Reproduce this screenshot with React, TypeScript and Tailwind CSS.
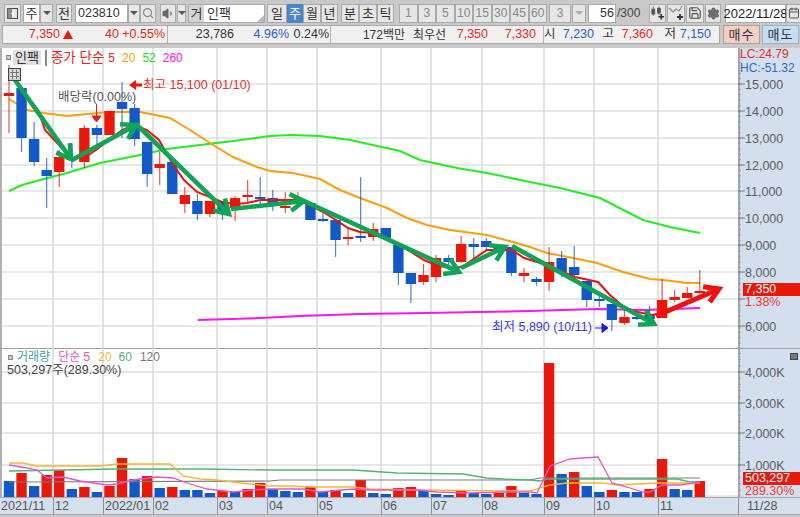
import { Calendar, Save, Search, Settings, Volume1 } from 'lucide-react';
import type { ReactNode } from 'react';
import { twMerge } from 'tailwind-merge';

type Candle = [number, number, number, number, 'r' | 'b']; // bodyTop, bodyBottom, wickTop, wickBottom, colour
type Pt = [number, number];

const RED = '#e8190a';
const BLUE = '#1259c8';
const ARROW = '#11a457';

const candles: Candle[] = [
  [93, 96, 65, 133, 'r'], [88, 138, 88, 152, 'b'], [139, 162, 122, 166, 'b'], [170, 176, 158, 208, 'b'],
  [157, 172, 150, 187, 'r'], [157, 160, 143, 168, 'b'], [128, 162, 125, 168, 'r'], [128, 135, 125, 145, 'b'],
  [111, 135, 111, 135, 'r'], [102, 109, 82, 138, 'b'], [108, 139, 104, 146, 'b'], [142, 174, 142, 187, 'b'],
  [164, 168, 152, 185, 'r'], [162, 194, 162, 194, 'b'], [195, 204, 187, 213, 'r'], [201, 214, 194, 220, 'b'],
  [201, 214, 201, 217, 'r'], [201, 213, 201, 220, 'b'], [198, 208, 196, 221, 'r'], [195, 197, 180, 202, 'r'],
  [197, 199, 177, 207, 'b'], [198, 204, 190, 211, 'b'], [206, 208, 192, 213, 'r'], [200, 202, 192, 206, 'r'],
  [203, 220, 203, 220, 'b'], [219, 221, 213, 222, 'b'], [220, 240, 220, 257, 'b'], [237, 239, 229, 245, 'r'],
  [236, 238, 177, 242, 'b'], [229, 237, 223, 241, 'r'], [228, 238, 228, 238, 'b'], [245, 273, 245, 285, 'b'],
  [273, 284, 273, 303, 'b'], [275, 282, 264, 285, 'r'], [258, 277, 255, 282, 'r'], [258, 262, 255, 270, 'b'],
  [244, 262, 236, 263, 'r'], [244, 247, 238, 260, 'b'], [241, 247, 238, 250, 'b'], [247, 250, 247, 259, 'b'],
  [247, 273, 247, 276, 'b'], [273, 276, 268, 282, 'r'], [279, 282, 277, 286, 'b'], [262, 282, 247, 291, 'r'],
  [258, 272, 251, 277, 'b'], [267, 275, 246, 280, 'b'], [281, 300, 281, 307, 'b'], [299, 301, 295, 307, 'b'],
  [304, 320, 304, 331, 'b'], [317, 323, 310, 325, 'r'], [317, 319, 310, 320, 'b'], [315, 319, 306, 319, 'b'],
  [300, 318, 279, 318, 'r'], [297, 300, 290, 302, 'r'], [293, 298, 287, 298, 'r'], [291, 293, 270, 294, 'r'],
];

const volumes: [number, 'r' | 'b'][] = [
  [481, 'b'], [473, 'r'], [486, 'b'], [475, 'r'], [470, 'r'], [489, 'b'], [487, 'r'], [492, 'b'],
  [486, 'r'], [458, 'r'], [479, 'b'], [476, 'r'], [488, 'b'], [487, 'r'], [490, 'b'], [490, 'b'],
  [493, 'b'], [491, 'r'], [492, 'b'], [489, 'r'], [483, 'r'], [489, 'b'], [491, 'b'], [492, 'b'],
  [487, 'r'], [492, 'b'], [490, 'r'], [493, 'b'], [480, 'r'], [493, 'b'], [494, 'b'], [488, 'r'],
  [487, 'r'], [491, 'b'], [494, 'b'], [495, 'b'], [491, 'r'], [493, 'b'], [494, 'b'], [493, 'r'],
  [486, 'r'], [493, 'b'], [494, 'b'], [363, 'r'], [474, 'b'], [472, 'r'], [486, 'b'], [492, 'b'],
  [490, 'r'], [492, 'b'], [492, 'b'], [489, 'r'], [459, 'r'], [489, 'b'], [490, 'b'], [481, 'r'],
];

const ma5: Pt[] = [[20, 87], [38, 110], [45, 130], [59, 145], [71, 158], [84, 158], [96, 150], [109, 140], [122, 130], [134, 125], [147, 130], [159, 140], [172, 163], [184, 180], [197, 192], [222, 202], [235, 204], [247, 203], [260, 200], [285, 200], [298, 200], [310, 205], [323, 212], [336, 220], [348, 228], [360, 232], [373, 233], [386, 238], [399, 245], [411, 252], [424, 260], [436, 265], [449, 268], [462, 267], [475, 258], [487, 250], [512, 250], [524, 258], [550, 266], [563, 272], [575, 277], [598, 282], [610, 295], [625, 308], [638, 312], [651, 315], [663, 313]];
const ma20: Pt[] = [[9, 99], [27, 110], [43, 113], [67, 116], [87, 114], [110, 112], [140, 112], [170, 118], [190, 130], [213, 145], [233, 157], [257, 167], [270, 171], [293, 173], [320, 179], [340, 190], [360, 198], [387, 208], [407, 218], [427, 225], [450, 230], [487, 235], [513, 242], [530, 247], [547, 253], [573, 258], [597, 263], [623, 272], [650, 279], [663, 280], [687, 283], [700, 283]];
const ma52: Pt[] = [[9, 191], [22, 185], [40, 180], [67, 173], [100, 163], [140, 155], [167, 149], [200, 145], [233, 141], [270, 136], [290, 135], [320, 136], [350, 140], [400, 151], [420, 160], [457, 168], [487, 173], [530, 182], [560, 188], [600, 198], [643, 220], [670, 227], [700, 233]];
const ma260: Pt[] = [[198, 320], [260, 318], [300, 316], [360, 314], [427, 313], [477, 312], [530, 311], [563, 310], [597, 309], [643, 310], [700, 308]];

const volPink: Pt[] = [[9, 465], [27, 468], [37, 470], [47, 478], [63, 477], [80, 481], [107, 485], [117, 484], [133, 480], [157, 477], [173, 478], [187, 483], [207, 489], [233, 492], [253, 490], [270, 489], [303, 489], [320, 492], [353, 489], [370, 490], [417, 490], [437, 492], [470, 493], [503, 492], [530, 492], [537, 493], [550, 466], [570, 459], [583, 458], [598, 457], [612, 483], [627, 487], [643, 492], [650, 492], [662, 485], [680, 485], [700, 482]];
const volOrange: Pt[] = [[9, 463], [23, 463], [37, 466], [100, 466], [117, 464], [170, 464], [183, 476], [200, 479], [217, 480], [250, 484], [270, 486], [290, 486], [313, 487], [353, 487], [370, 489], [420, 490], [530, 491], [550, 485], [567, 483], [603, 483], [617, 485], [657, 483], [700, 483]];
const volGreen: Pt[] = [[9, 471], [117, 469], [203, 469], [270, 470], [280, 470], [353, 470], [397, 473], [463, 474], [487, 478], [503, 479], [530, 480], [540, 481], [547, 479], [677, 479], [690, 482], [700, 482]];
const volGray: Pt[] = [[9, 482], [270, 481], [280, 480], [530, 480], [540, 478], [700, 478]];

const vGrid = [53, 103, 153, 217, 267, 317, 381, 431, 482, 544, 594, 658];
const priceTicks = [84, 111, 138, 165, 191, 218, 245, 272, 299, 326];
const priceLabels = ['15,000', '14,000', '13,000', '12,000', '11,000', '10,000', '9,000', '8,000', '', '6,000'];
const volTicks = [372, 403, 433, 465];
const volLabels = ['4,000K', '3,000K', '2,000K', '1,000K'];

const months: [string, string][] = [
  ['2021/11', 'w-[53px]'], ['12', 'w-[50px]'], ['2022/01', 'w-[50px]'], ['02', 'w-[64px]'], ['03', 'w-[50px]'],
  ['04', 'w-[50px]'], ['05', 'w-[64px]'], ['06', 'w-[50px]'], ['07', 'w-[51px]'], ['08', 'w-[62px]'],
  ['09', 'w-[50px]'], ['10', 'w-[64px]'], ['11', 'w-[80px]'], ['11/28', 'w-[62px]'],
];

const candleX = (i: number) => 9 + i * 12.56;
const toPoints = (pts: Pt[]) => pts.map((p) => p.join(',')).join(' ');

function Arrow({ from, to, color = ARROW, width = 4.6 }: { from: Pt; to: Pt; color?: string; width?: number }) {
  const ang = Math.atan2(to[1] - from[1], to[0] - from[0]);
  const barb = (off: number) => [to[0] - 16 * Math.cos(ang + off), to[1] - 16 * Math.sin(ang + off)].join(',');
  return (
    <g stroke={color} strokeWidth={width} fill="none" strokeLinejoin="miter">
      <line x1={from[0]} y1={from[1]} x2={to[0] - 2 * Math.cos(ang)} y2={to[1] - 2 * Math.sin(ang)} />
      <polyline points={`${barb(0.55)} ${to.join(',')} ${barb(-0.55)}`} />
    </g>
  );
}

function Grid({ ys, top, bottom }: { ys: number[]; top: number; bottom: number }) {
  return (
    <g>
      {ys.map((y) => (
        <line key={y} x1="2" x2="738" y1={y} y2={y} stroke="#dfdfdf" strokeWidth="1.5" />
      ))}
      {vGrid.map((x) => (
        <line key={x} x1={x} x2={x} y1={top} y2={bottom} stroke="#d8d8d8" strokeWidth="1.5" />
      ))}
    </g>
  );
}

function PriceChart() {
  return (
    <svg viewBox="0 48 738 301" className="block w-[738px] h-[301px]">
      <Grid ys={priceTicks} top={48} bottom={349} />
      <polyline points={toPoints(ma260)} fill="none" stroke="#ff14f0" strokeWidth="2" />
      <polyline points={toPoints(ma52)} fill="none" stroke="#22ee22" strokeWidth="2" />
      <polyline points={toPoints(ma20)} fill="none" stroke="#ff9d0a" strokeWidth="2" />
      {candles.map(([t, b, wt, wb, c], i) => {
        const fill = c === 'r' ? RED : BLUE;
        const x = candleX(i);
        return (
          <g key={i}>
            <line x1={x} x2={x} y1={wt} y2={wb} stroke={fill} strokeWidth="1.2" opacity="0.75" />
            <rect x={x - 5.2} y={t} width="10.4" height={b - t} fill={fill} />
          </g>
        );
      })}
      <polyline points={toPoints(ma5)} fill="none" stroke="#f01010" strokeWidth="2" />
      <Arrow from={[15, 80]} to={[71, 159]} />
      <Arrow from={[72, 160]} to={[136, 125]} />
      <Arrow from={[136, 124]} to={[229, 214]} />
      <Arrow from={[231, 209]} to={[304, 201]} />
      <Arrow from={[304, 201]} to={[459, 272]} />
      <Arrow from={[461, 268]} to={[505, 247]} />
      <Arrow from={[512, 246]} to={[654, 324]} />
      <Arrow from={[656, 316]} to={[719, 289]} color="#f20f0f" width={5} />
      <path d="M129 85 L136 80 V83.5 H142 V86.5 H136 V90 Z" fill={RED} />
      <path d="M96.500 104 V116 M92 116 H101 L96.500 122 Z" fill={RED} stroke={RED} strokeWidth="1" />
      <path d="M595 328 H602 M602 323.500 L608 328 L602 332.500 Z" fill="#1a1ae6" stroke="#1a1ae6" strokeWidth="1" />
    </svg>
  );
}

function VolumeChart() {
  return (
    <svg viewBox="0 349 738 148" className="block w-[738px] h-[148px]">
      <Grid ys={[372, 403, 433, 465, 496]} top={349} bottom={497} />
      {volumes.map(([top, c], i) => (
        <rect key={i} x={candleX(i) - 5.2} y={top} width="10.4" height={497 - top} fill={c === 'r' ? RED : BLUE} />
      ))}
      <polyline points={toPoints(volGray)} fill="none" stroke="#7c7c7c" strokeWidth="1.2" />
      <polyline points={toPoints(volGreen)} fill="none" stroke="#4fb574" strokeWidth="1.3" />
      <polyline points={toPoints(volOrange)} fill="none" stroke="#f5b635" strokeWidth="1.3" />
      <polyline points={toPoints(volPink)} fill="none" stroke="#e655c8" strokeWidth="1.3" />
    </svg>
  );
}

function AxisScale({ top, height, ticks, labels, step }: { top: number; height: number; ticks: number[]; labels: string[]; step: number }) {
  const minor: number[] = [];
  for (let y = ticks[0] - step; y < top + height; y += step / 5) minor.push(y);
  return (
    <svg viewBox={`738 ${top} 62 ${height}`} className="block w-[62px]" style={{ height }}>
      {minor.map((y) => (
        <line key={y} x1="738" x2="741" y1={y} y2={y} stroke="#9a9a9a" strokeWidth="0.8" />
      ))}
      {ticks.map((y, i) => (
        <g key={y}>
          <line x1="738" x2="745" y1={y} y2={y} stroke="#777" strokeWidth="1" />
          <text x="745" y={y + 4.500} fontSize="12.500" fill="#5c5c5c">{labels[i]}</text>
        </g>
      ))}
    </svg>
  );
}

function Btn({ children, className = '' }: { children?: ReactNode; className?: string }) {
  return (
    <div className={twMerge('flex h-[19px] shrink-0 items-center justify-center border border-[#a9a9a9] bg-[#e6e6e6] text-[#333]', className)}>
      {children}
    </div>
  );
}

function Caret({ color = '#555' }: { color?: string }) {
  return <span className="h-0 w-0 border-x-[4px] border-t-[4px] border-x-transparent" style={{ borderTopColor: color }} />;
}

function CandleAdd({ line = false }: { line?: boolean }) {
  return (
    <svg viewBox="0 0 16 16" className="h-[16px] w-[16px]">
      {line ? (
        <polyline points="1,3 5,7 8,4 11,6 14,1" fill="none" stroke="#8a8a8a" strokeWidth="1.200" />
      ) : (
        <g fill="#555" stroke="#555" strokeWidth="1">
          <rect x="2" y="4" width="3" height="5" />
          <rect x="8" y="3" width="3" height="5" />
          <line x1="3.500" x2="3.500" y1="1" y2="11" />
          <line x1="9.500" x2="9.500" y1="1" y2="10" />
        </g>
      )}
      <path d="M12 9 V15 M9 12 H15" stroke="#333" strokeWidth="1.800" />
    </svg>
  );
}

function TopBar() {
  return (
    <div className="flex h-[25px] shrink-0 items-center pl-[4px] pt-[1px]">
      <Btn className="w-[17px]">
        <svg viewBox="0 0 13 13" className="h-[13px] w-[13px]">
          <rect x="1.500" y="1.500" width="10" height="10" fill="none" stroke="#444" />
          <rect x="1" y="1" width="5" height="11" fill="#666" opacity="0.7" />
          <path d="M8 4 L5 6.500 L8 9 Z" fill="#fff" />
        </svg>
      </Btn>
      <Btn className="ml-[2px] w-[17px] bg-white text-[13px]">주</Btn>
      <Btn className="w-[13px]"><Caret /></Btn>
      <Btn className="ml-[3px] w-[16px] text-[13px]">전</Btn>
      <Btn className="ml-[3px] w-[53px] justify-start bg-white pl-[2px] text-[12.500px]">023810</Btn>
      <Btn className="w-[12px]"><Caret /></Btn>
      <Btn className="w-[16px]"><Search size={12} color="#888" strokeWidth={2.5} /></Btn>
      <Btn className="ml-[4px] w-[16px]"><Volume1 size={13} color="#666" fill="#666" /></Btn>
      <Btn className="ml-[1px] w-[9px]"><Caret /></Btn>
      <div className="relative ml-[2px] flex h-[19px] w-[77px] shrink-0 items-center border border-[#a9a9a9] bg-white text-[13px] text-[#333]">
        <span className="flex h-[17px] w-[15px] items-center justify-center bg-[#d4d4d4]">거</span>
        <span className="ml-[3px]">인팩</span>
        <span className="absolute bottom-0 right-0 h-0 w-0 border-b-[7px] border-l-[7px] border-b-[#bbb] border-l-transparent" />
      </div>
      <Btn className="ml-[2px] w-[20px] text-[13px]">일</Btn>
      <Btn className="w-[16px] border-[#4a83c4] bg-[#4a87c9] text-[13px] text-white">주</Btn>
      <Btn className="w-[18px] text-[13px]">월</Btn>
      <Btn className="w-[17px] text-[13px]">년</Btn>
      <Btn className="ml-[3px] w-[18px] text-[13px]">분</Btn>
      <Btn className="w-[18px] text-[13px]">초</Btn>
      <Btn className="w-[17px] text-[13px]">틱</Btn>
      <div className="ml-[5px] flex shrink-0">
        {['1', '3', '5', '10', '15', '30', '45', '60'].map((n) => (
          <Btn key={n} className="w-[18.500px] text-[12px] text-[#888]">{n}</Btn>
        ))}
      </div>
      <Btn className="ml-[2px] w-[22px] text-[12px] text-[#888]">3</Btn>
      <Btn className="ml-[1px] w-[14px]"><Caret color="#aaa" /></Btn>
      <Btn className="ml-[2px] w-[28px] justify-end bg-white pr-[1px] text-[12.500px]">56</Btn>
      <span className="ml-[1px] w-[24px] shrink-0 text-[12px] text-[#444]">/300</span>
      <Btn className="ml-[8px] w-[17px]"><CandleAdd /></Btn>
      <Btn className="ml-[1px] w-[18px]"><CandleAdd line /></Btn>
      <Btn className="ml-[1px] w-[18px]"><Save size={14} color="#555" strokeWidth={2} /></Btn>
      <Btn className="ml-[1px] w-[16px]"><Settings size={13} color="#666" fill="#777" strokeWidth={2.5} /></Btn>
      <Btn className="ml-[4px] w-[61px] bg-white text-[13px] text-[#222]">2022/11/28</Btn>
      <Btn className="w-[16px]"><Calendar size={12} color="#555" /></Btn>
    </div>
  );
}

function Cell({ w, className = '', children }: { w: string; className?: string; children: ReactNode }) {
  return <span className={`shrink-0 text-right ${w} ${className}`}>{children}</span>;
}

function QuoteBar() {
  const seg = 'flex h-full shrink-0 items-center border-r border-[#b4b4b4]';
  return (
    <div className="flex h-[19px] shrink-0 text-[12.500px]">
      <div className="ml-[2px] flex h-full w-[718px] shrink-0 border border-[#a8a8a8] bg-[#f0f0f0]">
        <div className={`${seg} w-[165px] text-[#ea2a20]`}>
          <Cell w="w-[57px]">7,350</Cell>
          <span className="ml-[3px] h-0 w-0 border-x-[5px] border-b-[9px] border-x-transparent border-b-[#e81a0a]" />
          <Cell w="w-[46px]">40</Cell>
          <Cell w="w-[46px]">+0.55%</Cell>
        </div>
        <div className={`${seg} w-[163px] text-[#333]`}>
          <Cell w="w-[66px]">23,786</Cell>
          <Cell w="w-[55px]" className="text-[#2f5fc8]">4.96%</Cell>
          <Cell w="w-[40px]">0.24%</Cell>
        </div>
        <div className={`${seg} w-[213px] text-[#333]`}>
          <Cell w="w-[74px]" className="text-[12px]">172백만</Cell>
          <Cell w="w-[41px]" className="text-[12px]">최우선</Cell>
          <Cell w="w-[42px]" className="text-[#ea2a20]">7,350</Cell>
          <Cell w="w-[48px]" className="text-[#ea2a20]">7,330</Cell>
        </div>
        <div className="flex h-full items-center text-[#333]">
          <Cell w="w-[11px]">시</Cell>
          <Cell w="w-[39px]" className="text-[#2f5fc8]">7,230</Cell>
          <Cell w="w-[20px]">고</Cell>
          <Cell w="w-[39px]" className="text-[#ea2a20]">7,360</Cell>
          <Cell w="w-[23px]">저</Cell>
          <Cell w="w-[35px]" className="text-[#2f5fc8]">7,150</Cell>
        </div>
      </div>
      <div className="ml-[3px] flex h-full w-[37px] shrink-0 items-center justify-center border border-[#b09c98] bg-[#f4cfc8] text-[13px] tracking-[1px] text-[#333]">매수</div>
      <div className="ml-[2px] flex h-full w-[37px] shrink-0 items-center justify-center border border-[#9db0c2] bg-[#c6def4] text-[13px] tracking-[1px] text-[#333]">매도</div>
    </div>
  );
}

const Dot = () => <span className="h-[5px] w-[5px] shrink-0 border border-[#888] bg-[#ccc]" />;

export default function App() {
  return (
    <div className="flex h-[517px] w-[800px] flex-col overflow-hidden bg-[#c9c9c9] font-['Liberation_Sans','Noto_Sans_CJK_KR',sans-serif] leading-none">
      <TopBar />
      <QuoteBar />
      <div className="h-[4px] shrink-0" />

      <div className="relative flex h-[301px] shrink-0 border-b border-[#9f9f9f] bg-white">
        <div className="relative h-full w-[738px] shrink-0 border-l-2 border-[#b0b0b0]">
          <div className="-ml-[2px]"><PriceChart /></div>
          <div className="absolute left-[4px] top-[2px] flex items-center text-[12px]">
            <Dot />
            <span className="ml-[2px] bg-[#e0e0e0] px-[2px] py-[1px] text-[13px] text-[#333]">인팩</span>
            <span className="ml-[4px]"><Dot /></span>
            <span className="ml-[4px] text-[13.500px] text-[#f02020]">종가 단순</span>
            <span className="ml-[4px] text-[#f02020]">5</span>
            <span className="ml-[7px] text-[#ff9d0a]">20</span>
            <span className="ml-[7px] text-[#22dd22]">52</span>
            <span className="ml-[7px] text-[#ff14f0]">260</span>
          </div>
          <div className="absolute left-[6px] top-[20px] h-[13px] w-[13px] border border-[#444] bg-[#c8c8c8] p-[1px]">
            <div className="grid h-full w-full grid-cols-3 gap-[1px] bg-[#777]">
              {Array.from({ length: 9 }).map((_, i) => (
                <span key={i} className="bg-[#ddd]" />
              ))}
            </div>
          </div>
          <span className="absolute left-[141px] top-[31px] whitespace-nowrap text-[12.500px] text-[#e8302a]">최고 15,100 (01/10)</span>
          <span className="absolute left-[56px] top-[43px] whitespace-nowrap text-[12.500px] text-[#555]">배당락(0.00%)</span>
          <span className="absolute left-[490px] top-[273px] whitespace-nowrap text-[12.500px] text-[#3a3aee]">최저 5,890 (10/11)</span>
        </div>
        <div className="relative h-full w-[62px] shrink-0 border-l-2 border-[#a4a4a4] bg-[#d3dfee]">
          <div className="-ml-[2px]">
            <AxisScale top={48} height={300} ticks={priceTicks} labels={priceLabels} step={27} />
          </div>
          <div className="absolute left-0 top-0 text-[12px] text-[#ea2a20]">LC:24.79</div>
          <div className="absolute left-0 top-[14px] text-[12px] text-[#2f66d0]">HC:-51.32</div>
          <div className="absolute left-[3px] top-[235px] flex h-[13px] w-[57px] items-center bg-[#e8190a] pl-[2px] text-[12.500px] text-white">7,350</div>
          <div className="absolute left-[5px] top-[248px] text-[12.500px] text-[#ea3a30]">1.38%</div>
        </div>
      </div>

      <div className="relative flex h-[148px] shrink-0 bg-white">
        <div className="relative h-full w-[738px] shrink-0 border-l-2 border-[#b0b0b0]">
          <div className="-ml-[2px]"><VolumeChart /></div>
          <div className="absolute left-[6px] top-[2px] flex items-center text-[12px]">
            <Dot />
            <span className="ml-[4px] text-[12px] text-[#3f9ea6]">거래량</span>
            <span className="ml-[8px] text-[12px] text-[#e655c8]">단순 5</span>
            <span className="ml-[8px] text-[#f5b635]">20</span>
            <span className="ml-[7px] text-[#4fb574]">60</span>
            <span className="ml-[8px] text-[#777]">120</span>
          </div>
          <span className="absolute left-[5px] top-[15px] whitespace-nowrap text-[12.500px] text-[#444]">503,297주(289.30%)</span>
        </div>
        <div className="relative h-full w-[62px] shrink-0 border-l-2 border-[#a4a4a4] bg-[#d3dfee]">
          <div className="-ml-[2px]">
            <AxisScale top={349} height={148} ticks={volTicks} labels={volLabels} step={31} />
          </div>
          <span className="absolute right-[2px] top-[4px] h-[7px] w-[8px] border border-[#444] bg-[#777]" />
          <div className="absolute left-[3px] top-[123px] flex h-[13px] w-[57px] items-center bg-[#e8190a] pl-[2px] text-[12.500px] text-white">503,297</div>
          <div className="absolute left-[5px] top-[136px] text-[12.500px] text-[#ea3a30]">289.30%</div>
        </div>
      </div>

      <div className="flex h-[18px] shrink-0 border-y border-[#a8a8a8] bg-[#d5e0ee] text-[12.500px] text-[#555]">
        {months.map(([label, w], i) => (
          <div key={label} className={`flex h-full shrink-0 items-center pl-[1px] ${w} ${i > 0 ? 'border-l border-[#8f8f8f]' : ''} ${label === '11/28' ? 'pl-[8px]' : ''}`}>
            {label}
          </div>
        ))}
      </div>
    </div>
  );
}
